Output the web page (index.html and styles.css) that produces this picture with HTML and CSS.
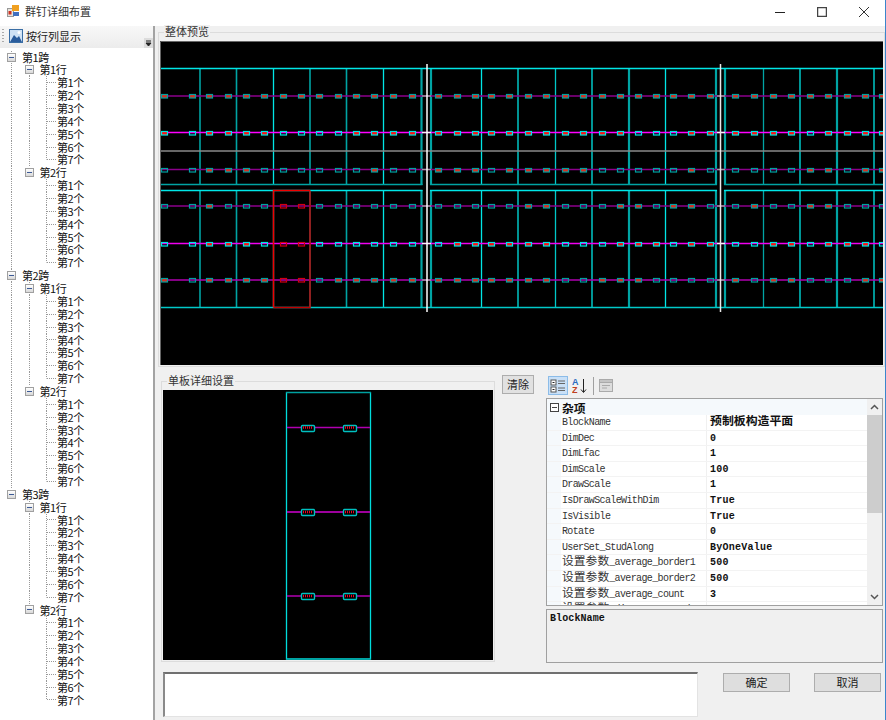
FILE: index.html
```html
<!DOCTYPE html>
<html lang="zh">
<head>
<meta charset="utf-8">
<title>群钉详细布置</title>
<link rel="stylesheet" href="styles.css">
</head>
<body>
<div class="window">
  <header class="titlebar">
    <svg class="app-icon" width="12" height="12" viewBox="0 0 12 12">
      <rect x="0.5" y="3.5" width="6" height="8" fill="#e8e4dc" stroke="#999"/>
      <rect x="1.5" y="6" width="3" height="3.5" fill="#d03020"/>
      <rect x="5" y="0" width="7" height="6" fill="#f0a020"/>
      <rect x="6" y="7" width="6" height="4" fill="#4070c0"/>
    </svg>
    <span class="title-text">群钉详细布置</span>
    <div class="win-controls">
      <svg width="10" height="10" viewBox="0 0 10 10"><path d="M0 5.5H10" stroke="#222" fill="none"/></svg>
      <svg width="10" height="10" viewBox="0 0 10 10"><rect x="0.5" y="0.5" width="9" height="9" stroke="#444" fill="none"/></svg>
      <svg width="10" height="10" viewBox="0 0 10 10"><path d="M0 0L10 10M10 0L0 10" stroke="#333" fill="none"/></svg>
    </div>
  </header>
  <div class="main">
    <aside class="side">
      <div class="strip">
        <span class="grip"></span>
        <svg class="strip-icon" width="14" height="14" viewBox="0 0 14 14">
          <rect x="0.5" y="0.5" width="13" height="13" fill="#cfe2f5" stroke="#3a6ea5"/>
          <path d="M1 13L5 6L8 9L10 7L13 13Z" fill="#2a5c9c"/>
          <circle cx="10" cy="3.5" r="1.5" fill="#fff"/>
        </svg>
        <span class="strip-label">按行列显示</span>
        <span class="overflow"><svg width="7" height="7" viewBox="0 0 7 7"><path d="M1 1H6M1 3H6L3.500 6Z" stroke="#222" stroke-width="1" fill="#222"/></svg></span>
      </div>
      <div class="tree" id="tree"></div>
    </aside>
    <section class="content">
      <div class="group group-top">
        <span class="legend legend-top">整体预览</span>
        <svg class="canvas" id="overview" width="723" height="324" viewBox="160 41 723 324"></svg>
      </div>
      <div class="lower">
        <div class="lower-top">
          <div class="group group-detail">
            <span class="legend legend-detail">单板详细设置</span>
            <svg class="canvas" id="detail" width="330" height="270" viewBox="163 390 330 270"></svg>
          </div>
          <button class="btn btn-clear">清除</button>
          <div class="props">
            <div class="prop-tools">
              <span class="tool tool-on">
                <svg width="16" height="14" viewBox="0 0 16 14"><rect x="1" y="1" width="5" height="5" fill="#fff" stroke="#555"/><rect x="1" y="8" width="5" height="5" fill="#fff" stroke="#555"/><path d="M2.500 3.500H4.500M2.500 10.500H4.500" stroke="#222"/><path d="M8 2H15M8 4.500H15M8 9H15M8 11.500H15" stroke="#666"/></svg>
              </span>
              <span class="tool">
                <svg width="16" height="16" viewBox="0 0 16 16"><text class="az az-a" x="0" y="7">A</text><text class="az az-z" x="0" y="15">Z</text><path d="M11.500 1V14M9 11.500L11.500 14.500L14 11.500" stroke="#222" fill="none"/></svg>
              </span>
              <span class="tool-sep"></span>
              <span class="tool tool-off">
                <svg width="14" height="13" viewBox="0 0 14 13"><rect x="0.500" y="0.500" width="13" height="12" fill="#ddd" stroke="#aaa"/><rect x="0.500" y="0.500" width="13" height="3" fill="#c4c4c4" stroke="#aaa"/><path d="M3 6.500H11M3 9H8" stroke="#aaa"/></svg>
              </span>
            </div>
            <div class="grid">
              <div class="grid-body">
                <div class="cat">
                  <span class="cat-gutter"><span class="cat-box"></span></span>
                  <span class="cat-name cjk">杂项</span>
                </div>
                <div class="row"><span class="gutter"></span><span class="name">BlockName</span><span class="val"><span class="cjk cjk-b">预制板构造平面</span></span></div>
                <div class="row"><span class="gutter"></span><span class="name">DimDec</span><span class="val">0</span></div>
                <div class="row"><span class="gutter"></span><span class="name">DimLfac</span><span class="val">1</span></div>
                <div class="row"><span class="gutter"></span><span class="name">DimScale</span><span class="val">100</span></div>
                <div class="row"><span class="gutter"></span><span class="name">DrawScale</span><span class="val">1</span></div>
                <div class="row"><span class="gutter"></span><span class="name">IsDrawScaleWithDim</span><span class="val">True</span></div>
                <div class="row"><span class="gutter"></span><span class="name">IsVisible</span><span class="val">True</span></div>
                <div class="row"><span class="gutter"></span><span class="name">Rotate</span><span class="val">0</span></div>
                <div class="row"><span class="gutter"></span><span class="name">UserSet_StudAlong</span><span class="val">ByOneValue</span></div>
                <div class="row"><span class="gutter"></span><span class="name"><span class="cjk">设置参数</span>_average_border1</span><span class="val">500</span></div>
                <div class="row"><span class="gutter"></span><span class="name"><span class="cjk">设置参数</span>_average_border2</span><span class="val">500</span></div>
                <div class="row"><span class="gutter"></span><span class="name"><span class="cjk">设置参数</span>_average_count</span><span class="val">3</span></div>
                <div class="row"><span class="gutter"></span><span class="name"><span class="cjk">设置参数</span>_dist_start_end</span><span class="val"></span></div>
              </div>
              <div class="scroll">
                <span class="arrow"><svg width="9" height="6" viewBox="0 0 9 6"><path d="M1 5L4.500 1.500L8 5" stroke="#555" stroke-width="1.500" fill="none"/></svg></span>
                <span class="thumb"></span>
                <span class="track"></span>
                <span class="arrow"><svg width="9" height="6" viewBox="0 0 9 6"><path d="M1 1L4.500 4.500L8 1" stroke="#555" stroke-width="1.500" fill="none"/></svg></span>
              </div>
            </div>
            <div class="desc">BlockName</div>
          </div>
        </div>
        <div class="lower-bottom">
          <div class="textbox"></div>
          <button class="btn btn-action btn-ok">确定</button>
          <button class="btn btn-action btn-cancel">取消</button>
        </div>
      </div>
    </section>
  </div>
</div>
<script src="script.js"></script>
</body>
</html>
```
FILE: styles.css
```css
* { box-sizing: border-box; }
html, body { margin: 0; padding: 0; }
body { background: #f0f0f0; font-family: "Noto Sans CJK SC", sans-serif; font-size: 11px; color: #222; }
.window { width: 886px; height: 720px; border-right: 1px solid #3a86cc; display: flex; flex-direction: column; overflow: hidden; background: #f0f0f0; }

.titlebar { height: 26px; flex: none; background: #fff; display: flex; align-items: center; padding-left: 7px; padding-bottom: 4px; }
.app-icon { margin-right: 6px; }
.title-text { color: #333; line-height: 14px; }
.win-controls { margin-left: auto; display: flex; gap: 32px; padding-right: 16px; padding-top: 1px; }
.win-controls svg:nth-child(2) rect { stroke-width: 1.5; }

.main { flex: 1; display: flex; min-height: 0; }
.side { width: 155px; flex: none; background: #fff; border-right: 2px solid #a3a3a3; display: flex; flex-direction: column; }
.strip { height: 22px; flex: none; display: flex; align-items: center; background: linear-gradient(#f8f8f8, #ececec); padding-left: 2px; padding-bottom: 2px; }
.grip { width: 2px; height: 14px; margin-right: 5px; background: repeating-linear-gradient(to bottom, #aaa 0 1px, transparent 1px 3px); }
.strip-icon { margin-right: 3px; }
.strip-label { color: #222; line-height: 14px; }
.overflow { margin-left: auto; align-self: flex-end; width: 9px; height: 10px; background: #dcdcdc; display: flex; align-items: center; justify-content: center; margin-bottom: -2px; }

.tree { flex: 1; padding-top: 2.6px; overflow: hidden; }
.node { display: flex; height: 12.86px; padding-left: 3px; align-items: stretch; }
.cell { width: 17.5px; flex: none; display: flex; align-items: center; justify-content: center; }
.g-v { background: repeating-linear-gradient(to bottom, #999 0 1px, transparent 1px 2px) 8px 0 / 1px 100% no-repeat; }
.g-t { background:
  repeating-linear-gradient(to bottom, #999 0 1px, transparent 1px 2px) 8px 0 / 1px 100% no-repeat,
  repeating-linear-gradient(to right, #999 0 1px, transparent 1px 2px) 9px 50% / 9px 1px no-repeat; }
.g-l { background:
  repeating-linear-gradient(to bottom, #999 0 1px, transparent 1px 2px) 8px 0 / 1px 50% no-repeat,
  repeating-linear-gradient(to right, #999 0 1px, transparent 1px 2px) 9px 50% / 9px 1px no-repeat; }
.exp { width: 9px; height: 9px; border: 1px solid #a0a0a0; background: linear-gradient(#fff, #d8d8d8); display: flex; align-items: center; justify-content: center; }
.exp::before { content: ""; width: 5px; height: 1px; background: #3c5a96; }
.label { margin-left: 1.5px; line-height: 12.86px; font-size: 11px; letter-spacing: -0.4px; color: #111; white-space: nowrap; }

.content { flex: 1; min-width: 0; display: flex; flex-direction: column; }
.group { position: relative; border: 1px solid #dcdcdc; }
.legend { position: absolute; background: #f0f0f0; line-height: 13px; color: #333; padding: 0 1px; }
.canvas { display: block; background: #000; }
.group-top { margin: 6px 0 0 3px; height: 335px; padding: 8px 0 0 1px; }
.legend-top { left: 5px; top: -8px; }
.lower { margin: 8px 0 0 6px; display: flex; flex-direction: column; }
.lower-top { display: flex; height: 288px; align-items: flex-start; }
.group-detail { margin-top: 6px; width: 334px; height: 281px; padding: 8px 0 0 1px; }
.legend-detail { left: 5px; top: -8px; }
.btn { font: inherit; color: #222; background: #e1e1e1; border: 1px solid #adadad; padding: 0; height: 19px; line-height: 15px; }
.btn-clear { width: 32px; margin-left: 7px; flex: none; }

.props { margin-left: 12px; width: 337px; flex: none; }
.prop-tools { margin-top: 1px; height: 19px; display: flex; align-items: center; padding-left: 2px; margin-bottom: 3px; }
.tool { width: 20px; height: 19px; display: flex; align-items: center; justify-content: center; border: 1px solid transparent; }
.tool-on { background: #c9e0f7; border-color: #8cbce8; }
.tool + .tool { margin-left: 2px; }
.tool-sep { width: 1px; height: 18px; background: #a0a0a0; margin: 0 4px 0 3px; }
.tool-off { width: 16px; }
.az { font-family: "Liberation Sans", sans-serif; font-size: 9px; font-weight: bold; }
.az-a { fill: #2a6cc0; }
.az-z { fill: #c04020; }

.grid { height: 208px; border: 1px solid #a0a0a0; background: #fff; display: flex; overflow: hidden; }
.grid-body { flex: 1; min-width: 0; overflow: hidden; }
.cat { height: 16px; display: flex; align-items: center; background: #f5f9fc; }
.cat-gutter { width: 14px; flex: none; display: flex; justify-content: center; }
.cat-box { width: 9px; height: 9px; border: 1px solid #444; background: linear-gradient(#444, #444) center / 5px 1px no-repeat #fff; }
.cat-name { font-weight: 700; margin-left: 1px; color: #111; line-height: 15px; }
.row { height: 15.6px; display: flex; border-bottom: 1px solid #f3f3f3; font-family: "Liberation Mono", "Noto Sans CJK SC", monospace; font-size: 10px; line-height: 15px; letter-spacing: -0.63px; color: #333; white-space: nowrap; overflow: hidden; }
.gutter { width: 14px; flex: none; background: #f5f9fc; }
.name { width: 146px; flex: none; padding: 0 0 0 1px; border-right: 1px solid #f0f0f0; }
.val { padding-left: 3px; font-weight: 700; color: #111; letter-spacing: 0.25px; }
.cjk { font-family: "Noto Sans CJK SC", sans-serif; font-size: 11.8px; letter-spacing: 0; line-height: 0; }
.cat-name.cjk { line-height: 15px; }
.cjk-b { font-weight: 700; font-size: 11.9px; }
.scroll { width: 15px; flex: none; background: #f0f0f0; display: flex; flex-direction: column; }
.arrow { height: 16px; flex: none; display: flex; align-items: center; justify-content: center; }
.thumb { height: 98px; flex: none; background: #cdcdcd; }
.track { flex: 1; }
.desc { margin-top: 3px; height: 54px; border: 1px solid #a0a0a0; padding: 2px 3px; font-family: "Liberation Mono", monospace; font-weight: 700; font-size: 10px; letter-spacing: 0.1px; line-height: 13px; color: #111; }

.lower-bottom { display: flex; align-items: flex-start; margin: 9px 0 0 2px; }
.textbox { width: 535px; height: 45px; background: #fff; border-style: solid; border-width: 2px 1px 1px 2px; border-color: #707070 #e3e3e3 #e3e3e3 #8a8a8a; }
.btn-action { width: 67px; margin-top: 1px; background: #dedede; }
.btn-ok { margin-left: 25px; }
.btn-cancel { margin-left: 24px; }
```
FILE: script.js
```js
// Tree
(function () {
  var tree = document.getElementById('tree');
  var html = '';
  function cell(c, inner) { return '<span class="cell ' + c + '">' + (inner || '') + '</span>'; }
  for (var s = 1; s <= 3; s++) {
    var g0 = s < 3 ? 'g-v' : '';
    html += '<div class="node">' + cell(g0, '<span class="exp"></span>') + '<span class="label">第' + s + '跨</span></div>';
    for (var r = 1; r <= 2; r++) {
      var g1 = r < 2 ? 'g-v' : '';
      html += '<div class="node">' + cell(g0) + cell(g1, '<span class="exp"></span>') + '<span class="label">第' + r + '行</span></div>';
      for (var c = 1; c <= 7; c++) {
        html += '<div class="node">' + cell(g0) + cell(g1) + cell(c < 7 ? 'g-t' : 'g-l') + '<span class="label">第' + c + '个</span></div>';
      }
    }
  }
  tree.innerHTML = html;
})();

// Overview drawing
(function () {
  var svg = document.getElementById('overview');
  var o = '';
  var CY = '#00e6e6', TE = '#00a4a4', MID = '#00c8c8';
  function line(x1, y1, x2, y2, col, w) {
    o += '<line x1="' + x1 + '" y1="' + y1 + '" x2="' + x2 + '" y2="' + y2 + '" stroke="' + col + '" stroke-width="' + (w || 1.3) + '"/>';
  }
  // vertical plate edges: [x, colour, width]
  var verts = [[200, MID], [236.5, TE, 1.6], [273.5, CY], [310, TE, 1.6], [346.5, TE, 1.6], [383.5, CY], [421.5, TE, 2.2],
    [431, TE, 2.2], [481.5, CY], [518, TE, 1.8], [555.5, MID], [592, CY], [629, TE, 2.2], [665.5, CY], [716, TE, 2.2],
    [725, TE, 2.2], [763.5, TE], [800, CY], [837, TE, 2.2], [874, CY]];
  verts.forEach(function (v) {
    line(v[0], 68, v[0], 185, v[1], v[2]);
    line(v[0], 190, v[0], 307, v[1], v[2]);
  });
  // horizontal plate edges
  line(160, 68.5, 883, 68.5, CY);
  line(160, 184.5, 422.5, 184.5, TE, 1.6);
  line(430, 184.5, 717, 184.5, TE, 1.6);
  line(724, 184.5, 883, 184.5, TE, 1.6);
  line(160, 190.5, 422.5, 190.5, CY);
  line(430, 190.5, 717, 190.5, CY);
  line(724, 190.5, 883, 190.5, CY);
  line(160, 307.5, 883, 307.5, MID, 1.5);
  line(160, 151, 883, 151, '#8a8a8a', 1.6);

  var xs = [164.3, 191.7, 209.3, 227.7, 246, 264.3, 282.7, 301, 319.3, 337.7, 356, 374.3, 393.3, 411.7, 438.3, 456.7, 475,
    490.7, 509, 528, 546, 565, 583, 601.5, 620, 638, 656, 673, 691, 709.5, 735.3, 753.7, 772.7, 791, 809.7, 828, 846.7, 865, 882];
  var rows = [
    { y: 96, col: '#8c008c', dim: true, p: 'rrrrrrrrrrrrrrrrrrrrrrrrrrrrrrrrrrrrrrr' },
    { y: 132.5, col: '#ff00ff', dim: false, p: 'rbrrrrbbbbrrrrrrrrrrrrrrrbbbrrrrrrbrrrr' },
    { y: 169.5, col: '#8c008c', dim: true, p: 'bbrrrbbbbbbrbbrrrbrrrrrbbbbbrbbbbbrrbrr' },
    { y: 206, col: '#8c008c', dim: true, p: 'bbrbbbxxbbbbbbbbbbbrrbbbrrbrrbbrbbrrbbb' },
    { y: 243.5, col: '#f000f0', dim: false, p: 'bbrrrbxxbbbbbbbrrrrrrbbbrrrbrrbbrrbrrrb' },
    { y: 280, col: '#b000b0', dim: true, p: 'rbrrrrxxbrrrrrrrrrrrrbbrrrbbbbrbrrbbbrr' }
  ];
  rows.forEach(function (row) {
    line(160, row.y, 883, row.y, row.col, 1.6);
    // light section where the magenta line crosses the gap
    line(422, row.y, 431, row.y, row.dim ? '#a0a0a0' : '#f4f4f4', 1.4);
    line(717, row.y, 725, row.y, row.dim ? '#a0a0a0' : '#f4f4f4', 1.4);
    xs.forEach(function (x, i) {
      var k = row.p.charAt(i);
      var st, fill;
      if (k === 'x') { st = '#d00010'; fill = 'none'; }
      else {
        st = row.dim ? '#00a0a0' : '#00e6e6';
        fill = k === 'r' ? (row.dim ? '#d83020' : '#ff1010') : 'none';
      }
      var bx = Math.round(x) - 3, by = Math.round(row.y) - 2;
      o += '<rect x="' + (bx + 0.5) + '" y="' + (by + 0.5) + '" width="6" height="3.500" fill="' + fill + '" stroke="' + st + '" stroke-width="1.200"/>';
    });
  });
  // selected plate
  o += '<path d="M273.500 307.500V190.500H310" fill="none" stroke="#f00000" stroke-width="1.500"/>';
  o += '<path d="M310 190.500V307.500H273.500" fill="none" stroke="#c00000" stroke-width="1.500"/>';
  // white axis lines
  line(427, 64, 427, 312, '#fff', 1.5);
  line(720.5, 64, 720.5, 312, '#e8e8e8', 1.5);
  // sunken frame of the canvas
  o += '<path d="M160.500 365V41.500H883" fill="none" stroke="#666"/>';
  svg.innerHTML = o;
})();

// Detail drawing
(function () {
  var svg = document.getElementById('detail');
  var o = '';
  o += '<path d="M286.500 392V659H370.500V392" fill="none" stroke="#00dcdc" stroke-width="1.300"/>';
  o += '<path d="M286 392.500H371" stroke="#00a0a0" stroke-width="1.600"/>';
  o += '<path d="M286 659.500H371" stroke="#00a0a0" stroke-width="1.300"/>';
  [[427.5, '#b000b0'], [512, '#d000d0'], [596, '#b000b0']].forEach(function (r) {
    o += '<line x1="287" y1="' + r[0] + '" x2="370" y2="' + r[0] + '" stroke="' + r[1] + '" stroke-width="1.600"/>';
    [301, 343].forEach(function (x) {
      var y = Math.round(r[0]) - 3;
      o += '<rect x="' + (x + 0.5) + '" y="' + (y + 0.5) + '" width="13" height="6" rx="1" fill="#000" stroke="#00c0c0" stroke-width="1.400"/>';
      o += '<line x1="' + (x + 2) + '" y1="' + r[0] + '" x2="' + (x + 12) + '" y2="' + r[0] + '" stroke="#f00020" stroke-width="2.500" stroke-dasharray="1 1"/>';
    });
  });
  svg.innerHTML = o;
})();
```
